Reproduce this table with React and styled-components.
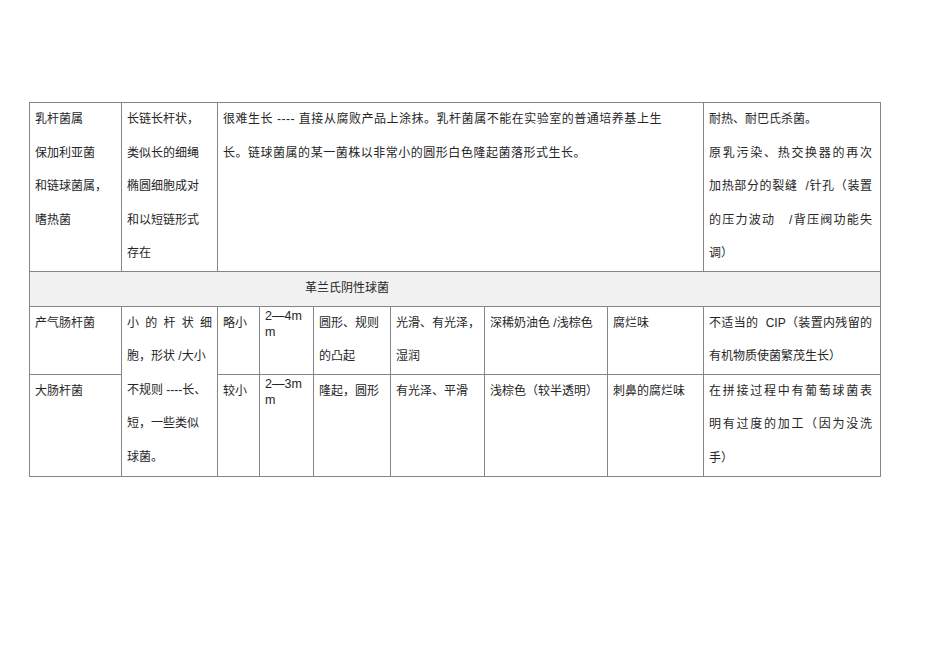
import React from "react";
import styled, { createGlobalStyle } from "styled-components";

const Global = createGlobalStyle`
  html, body { margin: 0; padding: 0; background: #ffffff; }
  body { font-family: "Liberation Sans", "Noto Sans CJK SC", sans-serif; }
`;

const Page = styled.div`
  width: 950px;
  height: 671px;
  padding: 102px 0 0 29px;
  box-sizing: border-box;
  background: #ffffff;
`;

const Table = styled.table`
  border-collapse: collapse;
  table-layout: fixed;
  width: 851px;
  color: #262626;
  font-size: 12px;
`;

const Row = styled.tr`
  height: ${(p) => p.$h}px;
`;

const Cell = styled.td`
  border: 1px solid #858585;
  padding: ${(p) => (p.$tight ? "1px 5px 0 5px" : `0 ${p.$end ? 8 : 5}px 0 5px`)};
  vertical-align: top;
  line-height: ${(p) => (p.$tight ? "16.7px" : "33.6px")};
  font-size: ${(p) => (p.$tight ? "12.5px" : "12px")};
  letter-spacing: ${(p) => (p.$wide ? "0.52px" : "0")};
  background: ${(p) => (p.$shade ? "#f1f1f1" : "#ffffff")};
`;

const Line = styled.span`
  display: block;
  white-space: pre;
  text-align: left;
  ${(p) => p.$spread && "text-align-last: justify; white-space: pre-wrap;"}
`;

const SectionTitle = styled.span`
  display: block;
  padding-left: 270px;
  white-space: nowrap;
`;

const cols = [92, 96, 42, 54, 77, 94, 123, 96, 177];

const Lines = ({ items }) =>
  items.map((t, i) =>
    typeof t === "string" ? (
      <Line key={i}>{t}</Line>
    ) : (
      <Line key={i} $spread={t.spread}>
        {t.text}
      </Line>
    )
  );

const j = (text) => ({ text, spread: true });

export default function App() {
  return (
    <Page>
      <Global />
      <Table>
        <colgroup>
          {cols.map((w, i) => (
            <col key={i} style={{ width: w }} />
          ))}
        </colgroup>
        <tbody>
          <Row $h={168}>
            <Cell>
              <Lines items={["乳杆菌属", "保加利亚菌", "和链球菌属，", "嗜热菌"]} />
            </Cell>
            <Cell>
              <Lines
                items={["长链长杆状，", "类似长的细绳", "椭圆细胞成对", "和以短链形式", "存在"]}
              />
            </Cell>
            <Cell colSpan={6} $wide>
              <Lines
                items={[
                  "很难生长 ---- 直接从腐败产品上涂抹。乳杆菌属不能在实验室的普通培养基上生",
                  "长。链球菌属的某一菌株以非常小的圆形白色隆起菌落形式生长。",
                ]}
              />
            </Cell>
            <Cell $end>
              <Lines
                items={[
                  "耐热、耐巴氏杀菌。",
                  j("原乳污染、热交换器的再次"),
                  j("加热部分的裂缝  /针孔（装置"),
                  j("的压力波动   /背压阀功能失"),
                  "调）",
                ]}
              />
            </Cell>
          </Row>
          <Row $h={34}>
            <Cell colSpan={9} $shade>
              <SectionTitle>革兰氏阴性球菌</SectionTitle>
            </Cell>
          </Row>
          <Row $h={67}>
            <Cell>
              <Lines items={["产气肠杆菌"]} />
            </Cell>
            <Cell rowSpan={2}>
              <Lines
                items={[
                  j("小 的 杆 状 细"),
                  "胞，形状 /大小",
                  "不规则 ----长、",
                  "短，一些类似",
                  "球菌。",
                ]}
              />
            </Cell>
            <Cell>
              <Lines items={["略小"]} />
            </Cell>
            <Cell $tight>
              <Lines items={["2—4m", "m"]} />
            </Cell>
            <Cell>
              <Lines items={["圆形、规则", "的凸起"]} />
            </Cell>
            <Cell>
              <Lines items={["光滑、有光泽，", "湿润"]} />
            </Cell>
            <Cell>
              <Lines items={["深稀奶油色 /浅棕色"]} />
            </Cell>
            <Cell>
              <Lines items={["腐烂味"]} />
            </Cell>
            <Cell $end>
              <Lines items={[j("不适当的  CIP（装置内残留的"), "有机物质使菌繁茂生长）"]} />
            </Cell>
          </Row>
          <Row $h={101}>
            <Cell>
              <Lines items={["大肠杆菌"]} />
            </Cell>
            <Cell>
              <Lines items={["较小"]} />
            </Cell>
            <Cell $tight>
              <Lines items={["2—3m", "m"]} />
            </Cell>
            <Cell>
              <Lines items={["隆起，圆形"]} />
            </Cell>
            <Cell>
              <Lines items={["有光泽、平滑"]} />
            </Cell>
            <Cell>
              <Lines items={["浅棕色（较半透明）"]} />
            </Cell>
            <Cell>
              <Lines items={["刺鼻的腐烂味"]} />
            </Cell>
            <Cell $end>
              <Lines
                items={[j("在拼接过程中有葡萄球菌表"), j("明有过度的加工（因为没洗"), "手）"]}
              />
            </Cell>
          </Row>
        </tbody>
      </Table>
    </Page>
  );
}
